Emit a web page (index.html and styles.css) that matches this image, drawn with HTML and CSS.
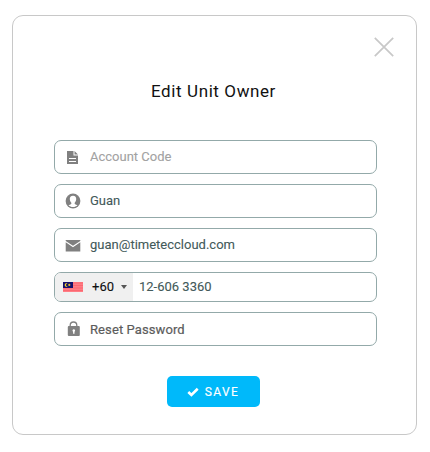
FILE: index.html
```html
<!DOCTYPE html>
<html lang="en">
  <head>
    <meta charset="UTF-8" />
    <meta name="viewport" content="width=device-width, initial-scale=1.0" />
    <title>Edit Unit Owner</title>
    <link rel="stylesheet" href="styles.css">
  </head>

  <body>
    <div class="modal">
      <button type="button" class="close-btn" aria-label="Close">
        <svg width="20" height="20" viewBox="0 0 20 20">
          <path d="M.8.8l18.4 18.4M19.2.8L.8 19.2" fill="none" stroke="#c8c8c8" stroke-width="1.7" />
        </svg>
      </button>

      <h1>Edit Unit Owner</h1>

      <form>
        <div class="field">
          <svg class="icon" width="16" height="16" viewBox="0 0 16 16">
            <path d="M2 2h6.500v4.500H13V15H2zM9.500 2L13 5.500H9.500z" fill="#808080" />
            <path d="M4 9.500h7M4 12.500h7" stroke="#fff" stroke-width="1" />
          </svg>
          <input type="text" name="account" placeholder="Account Code" />
        </div>

        <div class="field">
          <svg class="icon" width="16" height="16" viewBox="0 0 16 16">
            <circle cx="8" cy="8" r="7.4" fill="#808080" />
            <path d="M8 2.700c-2.300 0-3.400 1.500-3.200 3.600.1 1.500.7 2.600 1.500 3.400v1.200c-.8.6-2 .8-2.800 1.300 1.200 1.200 2.800 1.800 4.500 1.800s3.300-.6 4.500-1.800c-.8-.5-2-.7-2.800-1.300V9.700c.8-.8 1.400-1.900 1.500-3.400.2-2.100-.9-3.600-3.200-3.600z" fill="#fff" />
          </svg>
          <input type="text" name="name" value="Guan" />
        </div>

        <div class="field">
          <svg class="icon" width="16" height="16" viewBox="0 0 16 16">
            <path d="M.7 3h14.600v1L8 8.800.7 4zM.7 5.300L8 10.200l7.300-4.900v9.200H.7z" fill="#808080" />
          </svg>
          <input type="text" name="email" value="guan@timeteccloud.com" />
        </div>

        <div class="field phone">
          <div class="country">
            <svg class="flag" width="20" height="10" viewBox="0 0 20 10">
              <rect width="20" height="10" fill="#ff7d85" />
              <path d="M0 1h20M0 3.500h20M0 6h20M0 8.500h20" stroke="#fb6871" stroke-width="1" />
              <rect width="10" height="6" fill="#15116b" />
              <path d="M4.700 1.300a2 2 0 1 0 0 3.400 1.700 1.700 0 1 1 0-3.400z" fill="#f4d62c" />
              <circle cx="6.300" cy="2.900" r="1.100" fill="#d9bd2c" />
            </svg>
            <span>+60</span>
            <i class="arrow"></i>
          </div>
          <input type="text" name="phone" value="12-606 3360" />
        </div>

        <div class="field reset">
          <svg class="icon" width="16" height="16" viewBox="0 0 16 16">
            <path d="M5.200 6V4.300a3.300 3.300 0 0 1 6.600 0V6" fill="none" stroke="#808080" stroke-width="1.300" />
            <rect x="2.800" y="5" width="12" height="10" rx="1" fill="#808080" />
            <path d="M8.800 8.300a1.300 1.300 0 0 1 .7 2.400v2H8.100v-2a1.300 1.300 0 0 1 .7-2.400z" fill="#fff" />
          </svg>
          <span>Reset Password</span>
        </div>

        <button type="button" class="save-btn">
          <svg width="12" height="10" viewBox="0 0 12 10">
            <path d="M1.300 5l3.100 3L10.700 1.800" fill="none" stroke="#fff" stroke-width="2.600" />
          </svg>
          <span>SAVE</span>
        </button>
      </form>
    </div>
  </body>
</html>
```
FILE: styles.css
```css
* {
  box-sizing: border-box;
}

body {
  font-family: Roboto, "Liberation Sans", sans-serif;
  margin: 0;
  padding: 15px 13px 0 12px;
  background-color: #fff;
}

.modal {
  position: relative;
  height: 420px;
  padding: 64px 39px 0 41px;
  border: 1px solid #c8c8c8;
  border-radius: 11px;
}

.close-btn {
  position: absolute;
  top: 21px;
  right: 22px;
  display: flex;
  padding: 0;
  border: none;
  background: none;
  cursor: pointer;
}

h1 {
  margin: 0 0 38px;
  padding-right: 4px;
  font-size: 17px;
  font-weight: 400;
  line-height: 22px;
  letter-spacing: 0.6px;
  text-align: center;
  color: #111;
}

form {
  display: flex;
  flex-direction: column;
  gap: 10px;
}

.field {
  display: flex;
  align-items: center;
  height: 34px;
  padding-left: 10px;
  border: 1px solid #93a9a9;
  border-radius: 7px;
  overflow: hidden;
}

.icon {
  flex: none;
  margin-right: 9px;
}

input {
  flex: 1;
  min-width: 0;
  height: 100%;
  padding: 0 0 2px;
  border: none;
  outline: none;
  background: none;
  font-family: inherit;
  font-size: 13px;
  color: #435a5a;
  -webkit-text-stroke: 0.1px;
}

input::placeholder {
  color: #a2a2a2;
}

.phone {
  height: 30px;
  padding-left: 0;
}

.country {
  display: flex;
  align-items: center;
  width: 78px;
  height: 100%;
  margin-right: 6px;
  padding-left: 8px;
  background-color: #f0f0f0;
  font-size: 13px;
  color: #111;
  -webkit-text-stroke: 0.1px;
}

.country span {
  padding-bottom: 1px;
}

.flag {
  margin-right: 9px;
}

.arrow {
  margin-left: 7px;
  border: 3px solid transparent;
  border-top: 4px solid #555;
  border-bottom: none;
}

.reset {
  font-size: 13px;
  letter-spacing: 0.1px;
  color: #5c5c5c;
  -webkit-text-stroke: 0.2px;
}

.save-btn {
  display: flex;
  align-items: center;
  justify-content: center;
  gap: 6px;
  align-self: center;
  width: 93px;
  height: 31px;
  margin: 20px 5px 0 0;
  padding: 0;
  border: none;
  border-radius: 5px;
  background-color: #00b9fa;
  color: #fff;
  font-family: inherit;
  font-size: 12px;
  letter-spacing: 1.4px;
  -webkit-text-stroke: 0.15px;
  cursor: pointer;
}
```
